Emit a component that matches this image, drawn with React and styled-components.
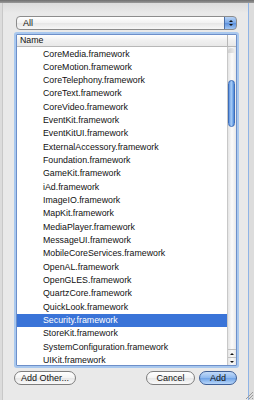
import React from "react";
import styled, { createGlobalStyle } from "styled-components";

const Global = createGlobalStyle`
  html, body { margin: 0; padding: 0; }
  body { width: 254px; height: 400px; overflow: hidden; background: #d9d9d9; font-family: "Liberation Sans", "DejaVu Sans", sans-serif; }
`;

const items = [
  "CoreMedia.framework","CoreMotion.framework","CoreTelephony.framework","CoreText.framework",
  "CoreVideo.framework","EventKit.framework","EventKitUI.framework","ExternalAccessory.framework",
  "Foundation.framework","GameKit.framework","iAd.framework","ImageIO.framework","MapKit.framework",
  "MediaPlayer.framework","MessageUI.framework","MobileCoreServices.framework","OpenAL.framework",
  "OpenGLES.framework","QuartzCore.framework","QuickLook.framework","Security.framework",
  "StoreKit.framework","SystemConfiguration.framework","UIKit.framework",
];

const Screen = styled.div`
  width: 254px; height: 400px; display: flex; flex-direction: column; overflow: hidden;
`;
const TopBar = styled.div`
  height: 3px; flex: none; background: linear-gradient(#6e6e6e, #9a9a9a);
`;
const Body = styled.div`
  flex: 1; display: flex; min-height: 0;
`;
const SideStrip = styled.div`
  width: ${p => p.$w}px; flex: none; background: #dcdcdc;
  border-${p => p.$side}: 1px solid ${p => p.$line};
  box-sizing: border-box;
`;
const Sheet = styled.div`
  flex: 1; display: flex; flex-direction: column;
  background: linear-gradient(#dcdcdc 0px, #e9e9e9 10px, #e9e9e9);
  padding: 13px 11px 0 13px; position: relative;
`;
const Popup = styled.div`
  height: 14px; display: flex; align-items: center; box-sizing: border-box;
  border: 1px solid #8c8c8c; border-radius: 4px;
  background: linear-gradient(#ffffff, #f1f1f1 50%, #e6e6e6 51%, #f7f7f7);
  font-size: 9px; color: #111; padding-left: 6px; position: relative; overflow: hidden;
`;
const PopupLabel = styled.span` flex: 1; `;
const Stepper = styled.div`
  width: 13px; height: 14px; margin-top: -1px; margin-right: -1px; box-sizing: border-box;
  border: 1px solid #4a6fa8; border-radius: 0 4px 4px 0;
  background: linear-gradient(#b8d3f5, #78a7e6 50%, #5a8fdc 51%, #a4c8f4);
  display: flex; flex-direction: column; align-items: center; justify-content: center; gap: 2px;
`;
const Tri = styled.div`
  width: 0; height: 0; border-left: 2px solid transparent; border-right: 2px solid transparent;
  ${p => p.$up ? "border-bottom: 2px solid #111;" : "border-top: 2px solid #111;"}
`;
const ListWrap = styled.div`
  margin-top: 4px; height: 332px; box-sizing: border-box;
  border: 1px solid #6d8fc9; box-shadow: 0 0 0 2px #a9c8ee; border-radius: 1px;
  background: #fff; display: flex; flex-direction: column; overflow: hidden;
`;
const Header = styled.div`
  height: 12px; flex: none; display: flex; box-sizing: border-box;
  border-bottom: 1px solid #b7b7b7; background: linear-gradient(#ffffff, #f0f0f0 50%, #e8e8e8);
`;
const HeaderCell = styled.div`
  flex: 1; font-size: 8.8px; color: #111; padding-left: 3px; line-height: 11px;
`;
const HeaderCorner = styled.div`
  width: 8px; border-left: 1px solid #b7b7b7;
`;
const ListBody = styled.div`
  flex: 1; display: flex; min-height: 0;
`;
const Rows = styled.div`
  flex: 1; padding-top: 0.5px; overflow: hidden;
`;
const Row = styled.div`
  height: 13.33px; line-height: 13.33px; font-size: 8.8px; padding-left: 26px; white-space: nowrap;
  color: ${p => p.$sel ? "#fff" : "#111"};
  background: ${p => p.$sel ? "#3a74d8" : "transparent"};
`;
const Scroll = styled.div`
  width: 9px; flex: none; box-sizing: border-box; display: flex; flex-direction: column;
  border-left: 1px solid #c8c8c8; background: linear-gradient(90deg, #e4e4e4, #fbfbfb 50%, #e8e8e8);
`;
const Track = styled.div`
  flex: 1; position: relative;
`;
const TrackCap = styled.div`
  height: 5px; margin: 1px 1px 0 0; border-radius: 4px 4px 0 0; background: linear-gradient(90deg, #cfcfcf, #ededed);
`;
const Thumb = styled.div`
  position: absolute; left: 0; right: 1px; top: 27px; height: 47px; border-radius: 4px;
  border: 1px solid #3d6db8; box-sizing: border-box;
  background: linear-gradient(90deg, #5d93e0, #a9cdf6 45%, #7fb0ec 70%, #4d85d6);
`;
const Arrow = styled.div`
  height: 7px; display: flex; align-items: center; justify-content: center;
  border-top: 1px solid #c0c0c0;
`;
const Buttons = styled.div`
  display: flex; align-items: center; margin-top: 5px; gap: 4px; margin-left: -2px;
`;
const Btn = styled.div`
  width: ${p => p.$w}px; height: 14px; box-sizing: border-box;
  border: 1px solid ${p => p.$def ? "#3e5f97" : "#7d7d7d"}; border-radius: 7px;
  display: flex; align-items: center; justify-content: center;
  font-size: 9px; color: #111;
  background: ${p => p.$def
    ? "linear-gradient(#c3dbf8, #8db8ef 50%, #6ea2e6 51%, #b7d6fa)"
    : "linear-gradient(#ffffff, #f3f3f3 50%, #e6e6e6 51%, #fafafa)"};
`;
const Spacer = styled.div` flex: 1; `;
const Grip = styled.svg`
  position: absolute; right: -6px; bottom: 0;
`;

export default function App() {
  return (
    <Screen>
      <Global />
      <TopBar />
      <Body>
        <SideStrip $w={3} $side="right" $line="#c8c8c8" />
        <Sheet>
          <Popup>
            <PopupLabel>All</PopupLabel>
            <Stepper><Tri $up /><Tri /></Stepper>
          </Popup>
          <ListWrap>
            <Header><HeaderCell>Name</HeaderCell><HeaderCorner /></Header>
            <ListBody>
              <Rows>
                {items.map(t => <Row key={t} $sel={t === "Security.framework"}>{t}</Row>)}
              </Rows>
              <Scroll>
                <TrackCap />
                <Track><Thumb /></Track>
                <Arrow><Tri $up /></Arrow>
                <Arrow><Tri /></Arrow>
              </Scroll>
            </ListBody>
          </ListWrap>
          <Buttons>
            <Btn $w={62}>Add Other...</Btn>
            <Spacer />
            <Btn $w={49}>Cancel</Btn>
            <Btn $w={38} $def>Add</Btn>
          </Buttons>
          <Grip width="10" height="10" viewBox="0 0 10 10">
            <path d="M9 2 L2 9 M9 5 L5 9 M9 8 L8 9" stroke="#9a9a9a" strokeWidth="1" />
          </Grip>
        </Sheet>
        <SideStrip $w={6} $side="left" $line="#8fb4e6" />
      </Body>
    </Screen>
  );
}
